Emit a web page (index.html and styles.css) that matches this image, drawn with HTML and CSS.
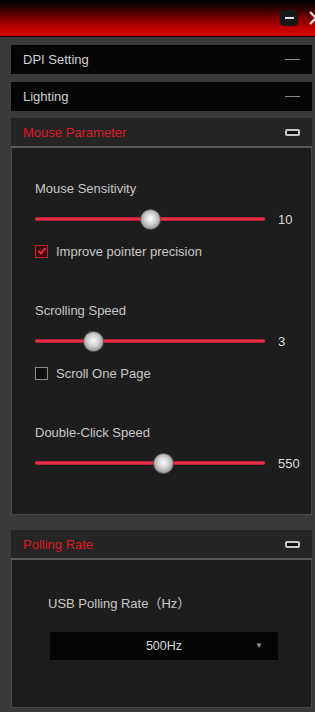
FILE: index.html
```html
<!DOCTYPE html>
<html>
<head>
  <meta charset="UTF-8">
  <title>Mouse Settings</title>
  <link rel="stylesheet" href="styles.css">
</head>
<body>
  <div class="titlebar">
    <button class="win-min"><span></span></button>
    <span class="win-close">
      <svg width="16" height="16" viewBox="0 0 16 16"><path d="M2 2 L14 14 M14 2 L2 14" stroke="#d8d8d8" stroke-width="2.4" fill="none"/></svg>
    </span>
  </div>

  <div class="panel">
    <div class="bar">
      <span>DPI Setting</span>
      <span class="bar-dash"></span>
    </div>
    <div class="bar bar-last">
      <span>Lighting</span>
      <span class="bar-dash"></span>
    </div>

    <!-- Mouse parameter -->
    <div class="section">
      <div class="section-head">
        <span>Mouse Parameter</span>
        <span class="toggle"></span>
      </div>
      <div class="section-body params">
        <div class="group">
          <div class="label">Mouse Sensitivity</div>
          <div class="slider-row">
            <div class="track"><div class="thumb" style="left: 50%"></div></div>
            <span class="value">10</span>
          </div>
          <div class="check">
            <span class="box on">
              <svg width="10" height="10" viewBox="0 0 10 10"><path d="M1.5 5 L4 7.5 L8.5 2" stroke="#ff2a3c" stroke-width="1.8" fill="none"/></svg>
            </span>
            <span>Improve pointer precision</span>
          </div>
        </div>

        <div class="group">
          <div class="label">Scrolling Speed</div>
          <div class="slider-row">
            <div class="track"><div class="thumb" style="left: 25%"></div></div>
            <span class="value">3</span>
          </div>
          <div class="check">
            <span class="box"></span>
            <span>Scroll One Page</span>
          </div>
        </div>

        <div class="group group-last">
          <div class="label">Double-Click Speed</div>
          <div class="slider-row">
            <div class="track"><div class="thumb" style="left: 55.5%"></div></div>
            <span class="value">550</span>
          </div>
        </div>
      </div>
    </div>

    <!-- Polling rate -->
    <div class="section section-gap">
      <div class="section-head">
        <span>Polling Rate</span>
        <span class="toggle"></span>
      </div>
      <div class="section-body polling">
        <div class="label">USB Polling Rate（Hz）</div>
        <div class="select">
          <span>500Hz</span>
          <span class="select-arrow">▼</span>
        </div>
      </div>
    </div>
  </div>
</body>
</html>
```

FILE: styles.css
```css
body {
  margin: 0;
  width: 315px;
  height: 712px;
  overflow: hidden;
  background-color: #3a3a3a;
  font-family: "Liberation Sans", Arial, "Noto Sans CJK SC", sans-serif;
  font-size: 13px;
  color: #c8c8c8;
}

/* Title bar */
.titlebar {
  height: 35px;
  border-bottom: 1px solid #2a0000;
  background: linear-gradient(#000 0%, #1a0000 18%, #7a0000 50%, #c40000 80%, #d00000 100%);
  display: flex;
  justify-content: flex-end;
  align-items: center;
  gap: 8px;
  padding-bottom: 1px;
}

.win-min {
  width: 18px;
  height: 16px;
  padding: 0;
  border: none;
  border-radius: 4px;
  background-color: #161616;
  display: flex;
  align-items: center;
  justify-content: center;
  margin-top: 1px;
  margin-right: 2px;
}

.win-min span {
  width: 9px;
  height: 2px;
  background-color: #e0e0e0;
}

.win-close {
  display: flex;
  margin-right: -9px;
  margin-top: 1px;
}

/* Panel */
.panel {
  padding: 8px 3px 0 11px;
}

.bar {
  height: 29px;
  background-color: #050505;
  display: flex;
  align-items: center;
  justify-content: space-between;
  padding: 0 12px;
  margin-bottom: 8px;
  color: #d0d0d0;
}

.bar-last {
  margin-bottom: 7px;
}

.bar-dash {
  width: 15px;
  height: 1px;
  background-color: #8a8a8a;
}

/* Sections */
.section-gap {
  margin-top: 15px;
}

.section-head {
  height: 28px;
  background-color: #252525;
  border-bottom: 2px solid #5a5a5a;
  display: flex;
  align-items: center;
  justify-content: space-between;
  padding: 0 12px;
  color: #dd1a22;
}

.toggle {
  width: 11px;
  height: 3px;
  border: 2px solid #c8c8c8;
  border-radius: 2px;
  background-color: #111;
}

.section-body {
  background-color: #1d1d1d;
  border: 1px solid #474747;
  border-top: none;
}

.label {
  line-height: 14px;
}

/* Mouse parameter */
.params {
  padding: 34px 0 43px 23px;
}

.group + .group {
  margin-top: 46px;
}

.group-last {
  margin-top: 46px !important;
}

.slider-row {
  display: flex;
  align-items: center;
  height: 16px;
  margin-top: 15px;
}

.track {
  position: relative;
  width: 230px;
  height: 4px;
  background: linear-gradient(#a0142a, #ff3a55 50%, #a0142a);
  border-radius: 2px;
}

.thumb {
  position: absolute;
  top: 50%;
  width: 19px;
  height: 19px;
  margin: -10px 0 0 -10px;
  border-radius: 50%;
  border: 1px solid #5a5a5a;
  background: radial-gradient(circle at 50% 45%, #fafafa 0%, #d8d8d8 35%, #a0a0a0 70%, #6e6e6e 100%);
}

.value {
  margin-left: 13px;
  color: #dcdcdc;
}

.check {
  display: flex;
  align-items: center;
  gap: 8px;
  height: 14px;
  margin-top: 17px;
}

.box {
  width: 11px;
  height: 11px;
  border: 1px solid #8a8a8a;
  background-color: #0e0e0e;
  display: flex;
  align-items: center;
  justify-content: center;
}

.box.on {
  border-color: #c0202e;
  background-color: #3a0c12;
}

/* Polling rate */
.polling {
  padding: 37px 0 47px 36px;
}

.select {
  width: 228px;
  height: 28px;
  margin: 21px 0 0 2px;
  background-color: #050505;
  position: relative;
  display: flex;
  align-items: center;
  justify-content: center;
  color: #d8d8d8;
  font-size: 12.5px;
}

.select-arrow {
  position: absolute;
  right: 15px;
  top: 9px;
  font-size: 8px;
  color: #9a9a9a;
}
```
